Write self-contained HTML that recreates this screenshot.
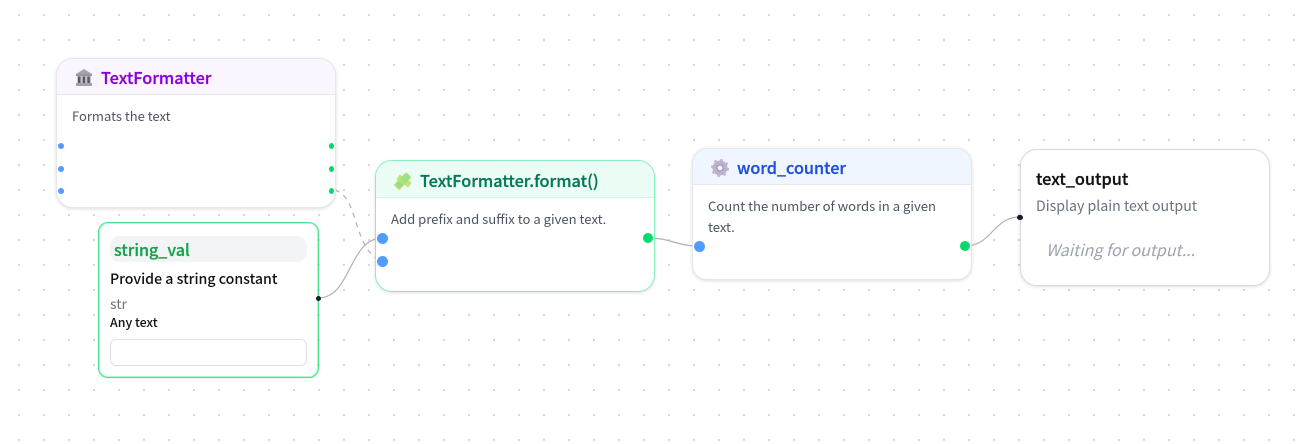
<!DOCTYPE html>
<html><head><meta charset="utf-8">
<style>
html,body{margin:0;padding:0;width:1306px;height:444px;overflow:hidden;background:#fff}
body{position:relative;font-family:"Noto Sans CJK SC","Liberation Sans",sans-serif}
#bg{position:absolute;inset:0;background-image:radial-gradient(circle at 19px 15px,#c8c8c8 0,#c8c8c8 .7px,transparent 1.2px);background-size:25px 25px;background-position:0 0}
.n{position:absolute;box-sizing:border-box;background:#fff;overflow:hidden}
.h{position:absolute;left:0;right:0;top:0;box-sizing:border-box}
.t{position:absolute;white-space:nowrap;line-height:1}
.hd{font-size:16.3px;font-weight:500;line-height:20px;-webkit-text-stroke:.25px currentColor}
.b{font-size:13.1px;color:#4b5563;line-height:16px}
.d{position:absolute;border-radius:50%}
svg{position:absolute;left:0;top:0;overflow:visible}
</style></head><body>
<div id="bg"></div>
<svg width="1306" height="444" style="z-index:1">
<path d="M335 190C360 198 352 250 383 262" fill="none" stroke="#b1b1b7" stroke-width="1.2" stroke-dasharray="5 5"/>
<path d="M318 298C352 298 348 238 383 238" fill="none" stroke="#b1b1b7" stroke-width="1.2"/>
<path d="M648 238C672 238 675 246 699 246" fill="none" stroke="#b1b1b7" stroke-width="1.2"/>
<path d="M965 246C992 246 993 217 1020 217" fill="none" stroke="#b1b1b7" stroke-width="1.2"/>
</svg>

<div class="n" style="left:56px;top:58px;width:280px;height:150px;border:1px solid #e5e7eb;border-radius:17px;box-shadow:0 1px 3px rgba(0,0,0,.14);z-index:2">
 <div class="h" style="height:36px;background:#faf5ff;border-bottom:1px solid #e5e7eb"></div>
</div>
<div class="n" style="left:98px;top:222px;width:221px;height:156px;border:1px solid #4ae08e;border-radius:10px;z-index:2;box-shadow:0 1px 2px rgba(0,0,0,.06),inset 0 0 0 1px rgba(94,232,160,.45)">
 <div style="position:absolute;left:11px;top:13px;width:197px;height:26px;background:#f3f4f6;border-radius:10px"></div>
 <div style="position:absolute;left:11px;top:116px;width:197px;height:27px;box-sizing:border-box;border:1.4px solid #dfe1e7;border-radius:6px"></div>
</div>
<div class="n" style="left:375px;top:160px;width:280px;height:132px;border:1px solid #86efc0;border-radius:17px;box-shadow:0 1px 3px rgba(0,0,0,.12);z-index:2">
 <div class="h" style="height:37px;background:#ecfdf5;border-bottom:1px solid #d1fae5"></div>
</div>
<div class="n" style="left:692px;top:148px;width:280px;height:132px;border:1px solid #e5e7eb;border-radius:15px;box-shadow:0 1px 3px rgba(0,0,0,.14);z-index:2">
 <div class="h" style="height:36px;background:#eff6ff;border-bottom:1px solid #e5e7eb"></div>
</div>
<div class="n" style="left:1020px;top:149px;width:250px;height:137px;border:1px solid #d9dbe0;border-radius:17px;box-shadow:0 1px 3px rgba(0,0,0,.12);z-index:2"></div>

<div style="position:absolute;inset:0;z-index:3">
 <div class="t hd" style="left:101px;top:67px;color:#8b00d8">TextFormatter</div>
 <div class="t b" style="left:72px;top:108px;font-size:13px">Formats the text</div>

 <div class="t hd" style="left:114px;top:239px;color:#16a34a;font-size:16.1px">string_val</div>
 <div class="t" style="left:110px;top:270px;font-size:14.15px;font-weight:500;color:#111;line-height:18px">Provide a string constant</div>
 <div class="t" style="left:110px;top:295px;font-size:14px;color:#6b7280;line-height:18px">str</div>
 <div class="t" style="left:110px;top:314px;font-size:12.4px;font-weight:500;color:#111;line-height:16px">Any text</div>

 <div class="t hd" style="left:420px;top:170px;color:#047857">TextFormatter.format()</div>
 <div class="t b" style="left:391px;top:211px">Add prefix and suffix to a given text.</div>

 <div class="t hd" style="left:737px;top:157px;color:#1d4ed8;font-size:16.2px">word_counter</div>
 <div class="t b" style="left:708px;top:198px">Count the number of words in a given</div>
 <div class="t b" style="left:708px;top:219px">text.</div>

 <div class="t hd" style="left:1036px;top:168px;color:#111">text_output</div>
 <div class="t" style="left:1036px;top:197px;font-size:14.15px;color:#6b7280;line-height:18px">Display plain text output</div>
 <div class="t" style="left:1046px;top:237.500px;font-size:16px;font-style:italic;color:#9ca3af;line-height:22px">Waiting for output...</div>

 <svg width="1306" height="444">
  <g>
   <path d="M84 69L92 74H76Z" fill="#a8a0ad"/>
   <rect x="76" y="74" width="16" height="2" fill="#9a93a0"/>
   <rect x="77" y="76" width="14" height="7" fill="#c9c4ce"/>
   <rect x="78" y="76.500" width="2.500" height="6.500" fill="#5d5868"/>
   <rect x="82.700" y="76.500" width="2.500" height="6.500" fill="#5d5868"/>
   <rect x="87.300" y="76.500" width="2.500" height="6.500" fill="#5d5868"/>
   <rect x="76" y="83" width="16" height="3" fill="#a8a0ad"/>
  </g>
  <g fill="none" stroke-linecap="butt">
   <path d="M398 177L410 185" stroke="#c4e080" stroke-width="6"/>
   <path d="M396.500 187.500L408 175.500" stroke="#b0e07a" stroke-width="7.500"/>
   <path d="M404 180L409 175" stroke="#9be288" stroke-width="6.500"/>
   <path d="M398 186.500L401 183.500" stroke="#9cdc82" stroke-width="5.500"/>
  </g>
  <g>
   <circle cx="720" cy="168" r="5.500" fill="none" stroke="#bdb2cf" stroke-width="4"/>
   <circle cx="720" cy="168" r="8" fill="none" stroke="#c0b5d2" stroke-width="2" stroke-dasharray="2.700 3.580"/>
   <circle cx="720" cy="168" r="3" fill="none" stroke="#8f84a6" stroke-width="1"/>
   <circle cx="720" cy="168" r="2.300" fill="#f4f6fd"/>
  </g>
 </svg>

 <div class="d" style="left:58px;top:143px;width:6px;height:6px;background:#4f9dff"></div>
 <div class="d" style="left:58px;top:166px;width:6px;height:6px;background:#4f9dff"></div>
 <div class="d" style="left:58px;top:188px;width:6px;height:6px;background:#4f9dff"></div>
 <div class="d" style="left:329px;top:143px;width:5px;height:6px;background:#06d96b"></div>
 <div class="d" style="left:329px;top:166px;width:5px;height:6px;background:#06d96b"></div>
 <div class="d" style="left:329px;top:188px;width:5px;height:6px;background:#06d96b"></div>

 <div class="d" style="left:377px;top:233px;width:11px;height:11px;background:#4f9dff"></div>
 <div class="d" style="left:377px;top:256px;width:11px;height:11px;background:#4f9dff"></div>
 <div class="d" style="left:643px;top:233px;width:10px;height:10px;background:#06d96b"></div>

 <div class="d" style="left:694px;top:241px;width:11px;height:11px;background:#4f9dff"></div>
 <div class="d" style="left:960px;top:241px;width:10px;height:10px;background:#06d96b"></div>

 <div class="d" style="left:315.500px;top:295.500px;width:5px;height:5px;background:#1a192b"></div>
 <div class="d" style="left:1017px;top:214.500px;width:5.500px;height:5.500px;background:#1a192b"></div>
</div>
</body></html>
